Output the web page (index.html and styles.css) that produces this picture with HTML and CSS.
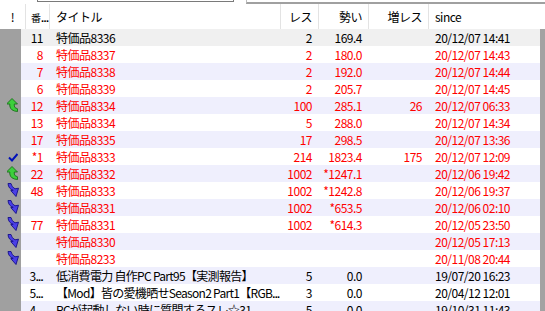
FILE: index.html
```html
<!DOCTYPE html>
<html lang="ja">
<head>
<meta charset="utf-8">
<title>スレッド一覧</title>
<link rel="stylesheet" href="styles.css">
</head>
<body>
<div class="top">
  <div class="gap-a"></div>
  <div class="inputbox"></div>
  <div class="gap-b"></div>
  <div class="topline"></div>
</div>
<div class="list">
  <div class="head">
    <div class="hc c">!</div>
    <div class="hc num"><span class="narrow">番</span><span class="dots">...</span></div>
    <div class="hc">タイトル</div>
    <div class="hc r">レス</div>
    <div class="hc r">勢い</div>
    <div class="hc r">増レス</div>
    <div class="hc">since</div>
    <div class="hc end"></div>
  </div>

  <div class="row sel blk"><div class="mk"></div><div class="n">11</div><div class="t">特価品8336</div><div class="v">2</div><div class="v">169.4</div><div class="v"></div><div class="d">20/12/07 14:41</div><div class="sb"></div></div>
  <div class="row red"><div class="mk"></div><div class="n">8</div><div class="t">特価品8337</div><div class="v">2</div><div class="v">180.0</div><div class="v"></div><div class="d">20/12/07 14:43</div><div class="sb"></div></div>
  <div class="row alt red"><div class="mk"></div><div class="n">7</div><div class="t">特価品8338</div><div class="v">2</div><div class="v">192.0</div><div class="v"></div><div class="d">20/12/07 14:44</div><div class="sb"></div></div>
  <div class="row red"><div class="mk"></div><div class="n">6</div><div class="t">特価品8339</div><div class="v">2</div><div class="v">205.7</div><div class="v"></div><div class="d">20/12/07 14:45</div><div class="sb"></div></div>
  <div class="row alt red"><div class="mk"><svg class="ico" viewBox="0 0 12 14" width="12" height="14"><path d="M5 0.5 L10.5 6 L7.3 6 L7.3 8 Q7.3 10 10.5 10.8 L10.5 13.5 Q3.5 13 2.8 8 L2.8 6 L-0.5 6 Z" fill="#3ccf3c" stroke="#1c6e1c" stroke-width="0.9"/></svg></div><div class="n">12</div><div class="t">特価品8334</div><div class="v">100</div><div class="v">285.1</div><div class="v">26</div><div class="d">20/12/07 06:33</div><div class="sb"></div></div>
  <div class="row red"><div class="mk"></div><div class="n">13</div><div class="t">特価品8334</div><div class="v">5</div><div class="v">288.0</div><div class="v"></div><div class="d">20/12/07 14:34</div><div class="sb"></div></div>
  <div class="row alt red"><div class="mk"></div><div class="n">17</div><div class="t">特価品8335</div><div class="v">17</div><div class="v">298.5</div><div class="v"></div><div class="d">20/12/07 13:36</div><div class="sb"></div></div>
  <div class="row red"><div class="mk"><svg class="ico chk" viewBox="0 0 10 9" width="10" height="9"><path d="M1 4.5 L4 7.5 L9.5 1" fill="none" stroke="#0010b8" stroke-width="2"/></svg></div><div class="n">*1</div><div class="t">特価品8333</div><div class="v">214</div><div class="v">1823.4</div><div class="v">175</div><div class="d">20/12/07 12:09</div><div class="sb"></div></div>
  <div class="row alt red"><div class="mk"><svg class="ico" viewBox="0 0 12 14" width="12" height="14"><path d="M5 0.5 L10.5 6 L7.3 6 L7.3 8 Q7.3 10 10.5 10.8 L10.5 13.5 Q3.5 13 2.8 8 L2.8 6 L-0.5 6 Z" fill="#3ccf3c" stroke="#1c6e1c" stroke-width="0.9"/></svg></div><div class="n">22</div><div class="t">特価品8332</div><div class="v">1002</div><div class="v">*1247.1</div><div class="v"></div><div class="d">20/12/06 19:42</div><div class="sb"></div></div>
  <div class="row red"><div class="mk"><svg class="ico" viewBox="0 0 12 14" width="12" height="14"><path d="M1 0.5 L4 0.5 Q4.5 4 8 5.8 L11.5 5.2 L9 13.5 L3.8 7.6 L6.2 7.3 Q1.5 6 1 0.5 Z" fill="#4a3fe6" stroke="#15108a" stroke-width="0.9"/></svg></div><div class="n">48</div><div class="t">特価品8333</div><div class="v">1002</div><div class="v">*1242.8</div><div class="v"></div><div class="d">20/12/06 19:37</div><div class="sb"></div></div>
  <div class="row alt red"><div class="mk"><svg class="ico" viewBox="0 0 12 14" width="12" height="14"><path d="M1 0.5 L4 0.5 Q4.5 4 8 5.8 L11.5 5.2 L9 13.5 L3.8 7.6 L6.2 7.3 Q1.5 6 1 0.5 Z" fill="#4a3fe6" stroke="#15108a" stroke-width="0.9"/></svg></div><div class="n"></div><div class="t">特価品8331</div><div class="v">1002</div><div class="v">*653.5</div><div class="v"></div><div class="d">20/12/06 02:10</div><div class="sb"></div></div>
  <div class="row red"><div class="mk"><svg class="ico" viewBox="0 0 12 14" width="12" height="14"><path d="M1 0.5 L4 0.5 Q4.5 4 8 5.8 L11.5 5.2 L9 13.5 L3.8 7.6 L6.2 7.3 Q1.5 6 1 0.5 Z" fill="#4a3fe6" stroke="#15108a" stroke-width="0.9"/></svg></div><div class="n">77</div><div class="t">特価品8331</div><div class="v">1002</div><div class="v">*614.3</div><div class="v"></div><div class="d">20/12/05 23:50</div><div class="sb"></div></div>
  <div class="row alt red"><div class="mk"><svg class="ico" viewBox="0 0 12 14" width="12" height="14"><path d="M1 0.5 L4 0.5 Q4.5 4 8 5.8 L11.5 5.2 L9 13.5 L3.8 7.6 L6.2 7.3 Q1.5 6 1 0.5 Z" fill="#4a3fe6" stroke="#15108a" stroke-width="0.9"/></svg></div><div class="n"></div><div class="t">特価品8330</div><div class="v"></div><div class="v"></div><div class="v"></div><div class="d">20/12/05 17:13</div><div class="sb"></div></div>
  <div class="row red"><div class="mk"><svg class="ico" viewBox="0 0 12 14" width="12" height="14"><path d="M1 0.5 L4 0.5 Q4.5 4 8 5.8 L11.5 5.2 L9 13.5 L3.8 7.6 L6.2 7.3 Q1.5 6 1 0.5 Z" fill="#4a3fe6" stroke="#15108a" stroke-width="0.9"/></svg></div><div class="n"></div><div class="t">特価品8233</div><div class="v"></div><div class="v"></div><div class="v"></div><div class="d">20/11/08 20:44</div><div class="sb"></div></div>
  <div class="row alt blk"><div class="mk"></div><div class="n">3<span class="dots">...</span></div><div class="t tight">低消費電力 自作PC Part95【実測報告】</div><div class="v">5</div><div class="v">0.0</div><div class="v"></div><div class="d">19/07/20 16:23</div><div class="sb"></div></div>
  <div class="row blk"><div class="mk"></div><div class="n">5<span class="dots">...</span></div><div class="t tight">【Mod】皆の愛機晒せSeason2 Part1【RGB<span class="dots">...</span></div><div class="v">3</div><div class="v">0.0</div><div class="v"></div><div class="d">20/04/12 12:01</div><div class="sb"></div></div>
  <div class="row alt blk"><div class="mk"></div><div class="n">4<span class="dots">...</span></div><div class="t tight">PCが起動しない時に質問するスレ☆31</div><div class="v">5</div><div class="v">0.0</div><div class="v"></div><div class="d">19/10/31 11:43</div><div class="sb"></div></div>
</div>
</body>
</html>
```

FILE: styles.css
```css
* { box-sizing: border-box; }
html, body { margin: 0; padding: 0; background: #ffffff; }
body {
  width: 545px;
  height: 311px;
  overflow: hidden;
  font-family: "Noto Sans CJK JP", "Liberation Sans", sans-serif;
  font-size: 12px;
  letter-spacing: -0.5px;
  color: #000;
}
.top {
  display: flex;
  height: 4px;
}
.gap-a { width: 37px; }
.inputbox {
  width: 197px;
  height: 2px;
  border: 1px solid #7a7a7a;
  border-top: none;
}
.gap-b { width: 12px; }
.topline {
  flex: 1;
  height: 4px;
  border-left: 1px solid #bdbdbd;
  border-bottom: 2px solid #a0a0a0;
}
.head {
  display: grid;
  grid-template-columns: 25px 24px 231px 38px 50px 60px 112px 5px;
  height: 25px;
  line-height: 25px;
  background: #fff;
}
.hc {
  padding-left: 6px;
  white-space: nowrap;
  overflow: hidden;
}
.hc + .hc { border-left: 1px solid #e3e3e3; }
.hc.c { text-align: center; padding-left: 0; }
.hc.r { text-align: right; padding-left: 0; padding-right: 6px; }
.hc.num { padding-left: 5px; }
.hc.end { border-left: none; }
.narrow { font-size: 10px; letter-spacing: 0; }
.dots {
  font-family: "Liberation Sans", sans-serif;
  font-size: 11px;
  font-weight: bold;
  letter-spacing: -0.6px;
}
.row {
  display: grid;
  grid-template-columns: 21px 28px 231px 38px 50px 60px 112px 5px;
  height: 17px;
  line-height: 17px;
  background: #ffffff;
  white-space: nowrap;
}
.row.alt { background: #efeffd; }
.row.sel { background: #f0f0f0; }
.red { color: #ff0000; }
.blk { color: #000000; }
.mk { background: #a0a0a0; }
.ico {
  display: block;
  margin: 1px 0 0 7px;
}
.ico.chk { margin: 5px 0 0 8px; }
.n { text-align: right; padding-right: 6px; overflow: hidden; }
.t { padding-left: 7px; overflow: hidden; }
.t.tight { letter-spacing: -0.7px; }
.v { text-align: right; padding-right: 6px; overflow: hidden; }
.d { padding-left: 7px; overflow: hidden; }
.sb { background: #a3a3a3; }
```
